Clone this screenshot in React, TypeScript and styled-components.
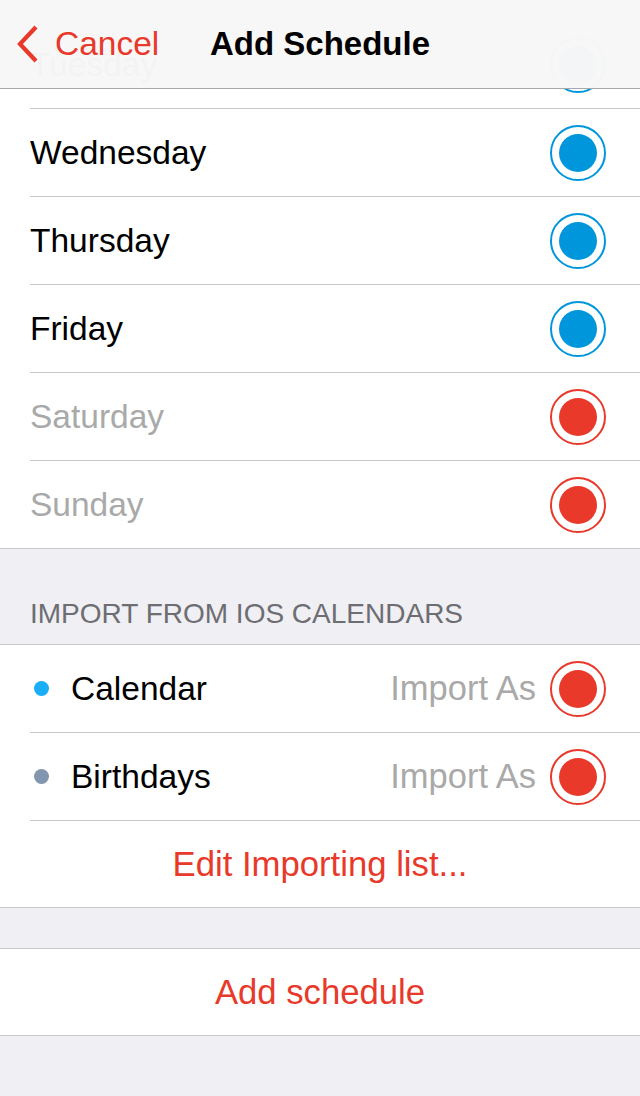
import React from "react";
import styled, { createGlobalStyle } from "styled-components";

const Global = createGlobalStyle`
  html, body { margin: 0; padding: 0; background: #efeff4; }
  body { font-family: "Liberation Sans", Arial, sans-serif; -webkit-font-smoothing: antialiased; }
`;

const RED = "#e8392b";
const BLUE = "#0096dc";
const SEP = "#c8c7cc";

const Page = styled.div`
  position: relative;
  width: 640px;
  min-height: 1096px;
  background: #efeff4;
  overflow: hidden;
`;

const NavBar = styled.header`
  position: absolute;
  top: 0;
  left: 0;
  right: 0;
  height: 89px;
  box-sizing: border-box;
  border-bottom: 1px solid #a9a9ad;
  background: rgba(247, 247, 247, 0.985);
  display: flex;
  align-items: center;
  z-index: 2;
`;

const BackButton = styled.div`
  display: flex;
  align-items: center;
  gap: 15px;
  padding-left: 16px;
  color: ${RED};
  font-size: 33.5px;
  height: 100%;
`;

const Title = styled.div`
  position: absolute;
  left: 0;
  right: 0;
  top: 0;
  bottom: 0;
  display: flex;
  align-items: center;
  justify-content: center;
  font-size: 33px;
  font-weight: 700;
  color: #000;
  pointer-events: none;
`;

const Group = styled.section<{ $top?: number; $noTop?: boolean }>`
  background: #fff;
  margin-top: ${(p) => p.$top ?? 0}px;
  border-top: ${(p) => (p.$noTop ? "none" : `1px solid ${SEP}`)};
  border-bottom: 1px solid ${SEP};
`;

const Row = styled.div`
  padding-left: 30px;
`;

const RowInner = styled.div<{ $last?: boolean }>`
  display: flex;
  align-items: center;
  height: ${(p) => (p.$last ? 87 : 88)}px;
  box-sizing: border-box;
  padding-right: 34px;
  border-bottom: ${(p) => (p.$last ? "none" : `1px solid ${SEP}`)};
`;

const Label = styled.span<{ $muted?: boolean }>`
  flex: 1;
  font-size: 33.5px;
  color: ${(p) => (p.$muted ? "#a9a9a9" : "#000")};
`;

const Dot = styled.span<{ $color: string }>`
  width: 15px;
  height: 15px;
  border-radius: 50%;
  background: ${(p) => p.$color};
  margin-left: 4px;
  margin-right: 22px;
  flex: none;
`;

const Hint = styled.span`
  font-size: 34.5px;
  color: #a9a9a9;
  margin-right: 14px;
`;

const Radio = styled.span<{ $color: string }>`
  width: 56px;
  height: 56px;
  box-sizing: border-box;
  border-radius: 50%;
  border: 2px solid ${(p) => p.$color};
  display: flex;
  align-items: center;
  justify-content: center;
  flex: none;
  &::before {
    content: "";
    width: 38px;
    height: 38px;
    border-radius: 50%;
    background: ${(p) => p.$color};
  }
`;

const SectionHeader = styled.div`
  height: 95px;
  box-sizing: border-box;
  display: flex;
  align-items: flex-end;
  padding: 0 30px 14px;
  font-size: 28px;
  line-height: 32px;
  color: #6d6d72;
`;

const ActionRow = styled.div<{ $h: number }>`
  height: ${(p) => p.$h}px;
  display: flex;
  align-items: center;
  justify-content: center;
  font-size: 34.7px;
  color: ${RED};
`;

const Spacer = styled.div<{ $h: number }>`
  height: ${(p) => p.$h}px;
`;

const days = [
  { name: "Tuesday", on: true },
  { name: "Wednesday", on: true },
  { name: "Thursday", on: true },
  { name: "Friday", on: true },
  { name: "Saturday", on: false },
  { name: "Sunday", on: false },
];

const calendars = [
  { name: "Calendar", color: "#1aadf8" },
  { name: "Birthdays", color: "#8396b0" },
];

export default function App() {
  return (
    <Page>
      <Global />
      <NavBar>
        <BackButton>
          <svg width="24" height="40" viewBox="0 0 24 40">
            <path d="M20 3 L4 20 L20 37" fill="none" stroke={RED} strokeWidth="4.2" strokeLinecap="butt" strokeLinejoin="miter" />
          </svg>
          <span>Cancel</span>
        </BackButton>
        <Title>Add Schedule</Title>
      </NavBar>

      <Group $top={21} $noTop>
        {days.map((d, i) => (
          <Row key={d.name}>
            <RowInner $last={i === days.length - 1}>
              <Label $muted={!d.on}>{d.name}</Label>
              <Radio $color={d.on ? BLUE : RED} />
            </RowInner>
          </Row>
        ))}
      </Group>

      <SectionHeader>IMPORT FROM IOS CALENDARS</SectionHeader>

      <Group>
        {calendars.map((c) => (
          <Row key={c.name}>
            <RowInner>
              <Dot $color={c.color} />
              <Label>{c.name}</Label>
              <Hint>Import As</Hint>
              <Radio $color={RED} />
            </RowInner>
          </Row>
        ))}
        <ActionRow $h={86}>Edit Importing list...</ActionRow>
      </Group>

      <Spacer $h={40} />

      <Group>
        <ActionRow $h={86}>Add schedule</ActionRow>
      </Group>
    </Page>
  );
}
